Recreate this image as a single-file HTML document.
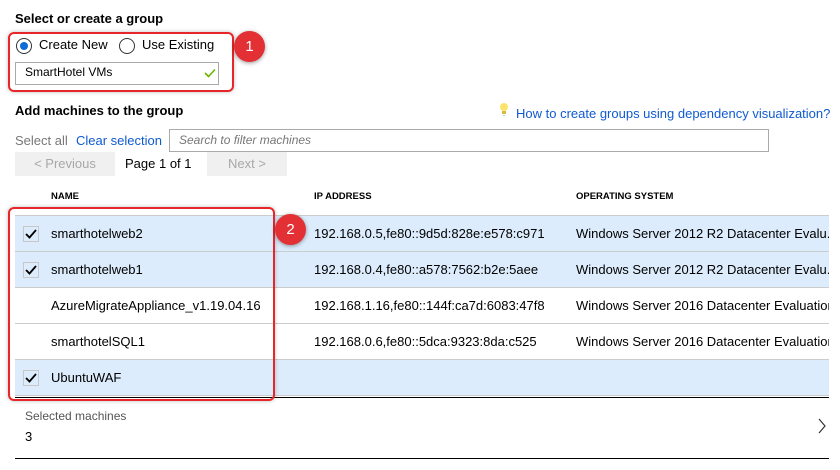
<!DOCTYPE html>
<html><head><style>
*{margin:0;padding:0;box-sizing:border-box}
body{width:840px;height:470px;background:#fff;font-family:"Segoe UI","Liberation Sans",sans-serif;font-size:13px;color:#000;position:relative;overflow:hidden}
.a{position:absolute;white-space:nowrap}
.h{font-weight:bold;font-size:13px}
.radio{position:absolute;width:16px;height:16px;border:1px solid #333;border-radius:50%;background:#fff}
.row{position:absolute;left:15px;width:814px;height:36px;border-bottom:1px solid #ccc;white-space:nowrap;overflow:hidden}
.sel{background:#dcecfc}
.cb{position:absolute;left:8px;top:10px;width:16px;height:16px;border:1px solid #c8c8c8}
.row span{position:absolute;top:10px;white-space:nowrap}
.red{position:absolute;border:2px solid #e8262a;border-radius:6px;box-shadow:0 0 4px rgba(0,0,0,.25)}
.circ{position:absolute;width:31px;height:31px;border-radius:50%;background:#e33035;color:#fff;font-size:15px;text-align:center;line-height:31px;box-shadow:0 1px 4px rgba(0,0,0,.4)}
.btn{position:absolute;background:#f0f0f0;color:#a8a8a8;text-align:center;height:24px;line-height:24px}
.th{position:absolute;top:191px;font-size:9.5px;font-weight:bold;white-space:nowrap}
</style></head><body>
<div class="a h" style="left:15px;top:11px">Select or create a group</div>
<div class="radio" style="left:16px;top:38px"><div style="position:absolute;left:3px;top:3px;width:8px;height:8px;border-radius:50%;background:#0f6bd6"></div></div>
<div class="a" style="left:39px;top:37px">Create New</div>
<div class="radio" style="left:119px;top:38px"></div>
<div class="a" style="left:142px;top:37px">Use Existing</div>
<div class="a" style="left:15px;top:62px;width:204px;height:23px;border:1px solid #aaa"></div>
<div class="a" style="left:25px;top:65px;font-size:12px">SmartHotel VMs</div>
<svg class="a" style="left:204px;top:68px" width="12" height="10"><path d="M1 5 L4.5 8.5 L11 1.5" stroke="#6bb700" stroke-width="1.6" fill="none"/></svg>
<div class="red" style="left:8px;top:32px;width:226px;height:60px"></div>
<div class="circ" style="left:234px;top:31px">1</div>

<div class="a h" style="left:15px;top:103px">Add machines to the group</div>
<svg class="a" style="left:498px;top:102px" width="12" height="16"><circle cx="6" cy="5" r="4" fill="#fde36b"/><rect x="4" y="9" width="4" height="3" fill="#d8b93c"/><rect x="5" y="13" width="2" height="1" fill="#ccc"/></svg>
<div class="a" style="left:516px;top:106px;color:#0f5ad1">How to create groups using dependency visualization?</div>
<div class="a" style="left:15px;top:133px;color:#777">Select all</div>
<div class="a" style="left:76px;top:133px;color:#0f5ad1">Clear selection</div>
<div class="a" style="left:169px;top:129px;width:600px;height:23px;border:1px solid #aaa"></div>
<div class="a" style="left:179px;top:133px;color:#777;font-style:italic;font-size:12px">Search to filter machines</div>
<div class="btn" style="left:15px;top:152px;width:100px">&lt; Previous</div>
<div class="a" style="left:125px;top:156px">Page 1 of 1</div>
<div class="btn" style="left:207px;top:152px;width:80px">Next &gt;</div>

<div class="th" style="left:51px">NAME</div>
<div class="th" style="left:314px">IP ADDRESS</div>
<div class="th" style="left:576px">OPERATING SYSTEM</div>
<div class="a" style="left:15px;top:215px;width:814px;border-top:1px solid #ccc"></div>

<div class="row sel" style="top:216px"><div class="cb"><svg width="14" height="14"><path d="M2 7 L5.5 10.5 L12 3" stroke="#000" stroke-width="1.8" fill="none"/></svg></div><span style="left:36px">smarthotelweb2</span><span style="left:299px">192.168.0.5,fe80::9d5d:828e:e578:c971</span><span style="left:561px">Windows Server 2012 R2 Datacenter Evalu...</span></div>
<div class="row sel" style="top:252px"><div class="cb"><svg width="14" height="14"><path d="M2 7 L5.5 10.5 L12 3" stroke="#000" stroke-width="1.8" fill="none"/></svg></div><span style="left:36px">smarthotelweb1</span><span style="left:299px">192.168.0.4,fe80::a578:7562:b2e:5aee</span><span style="left:561px">Windows Server 2012 R2 Datacenter Evalu...</span></div>
<div class="row" style="top:288px"><span style="left:36px">AzureMigrateAppliance_v1.19.04.16</span><span style="left:299px">192.168.1.16,fe80::144f:ca7d:6083:47f8</span><span style="left:561px">Windows Server 2016 Datacenter Evaluation</span></div>
<div class="row" style="top:324px"><span style="left:36px">smarthotelSQL1</span><span style="left:299px">192.168.0.6,fe80::5dca:9323:8da:c525</span><span style="left:561px">Windows Server 2016 Datacenter Evaluation</span></div>
<div class="row sel" style="top:360px"><div class="cb"><svg width="14" height="14"><path d="M2 7 L5.5 10.5 L12 3" stroke="#000" stroke-width="1.8" fill="none"/></svg></div><span style="left:36px">UbuntuWAF</span></div>
<div class="a" style="left:15px;top:397px;width:814px;border-top:1px solid #000"></div>
<div class="red" style="left:8px;top:207px;width:267px;height:194px"></div>
<div class="circ" style="left:275px;top:214px">2</div>

<div class="a" style="left:25px;top:409px;font-size:12px;color:#555">Selected machines</div>
<div class="a" style="left:25px;top:429px">3</div>
<svg class="a" style="left:817px;top:418px" width="10" height="16"><path d="M2 1 L8 8 L2 15" stroke="#333" stroke-width="1.2" fill="none"/></svg>
<div class="a" style="left:15px;top:458px;width:814px;border-top:1px solid #000"></div>
</body></html>
